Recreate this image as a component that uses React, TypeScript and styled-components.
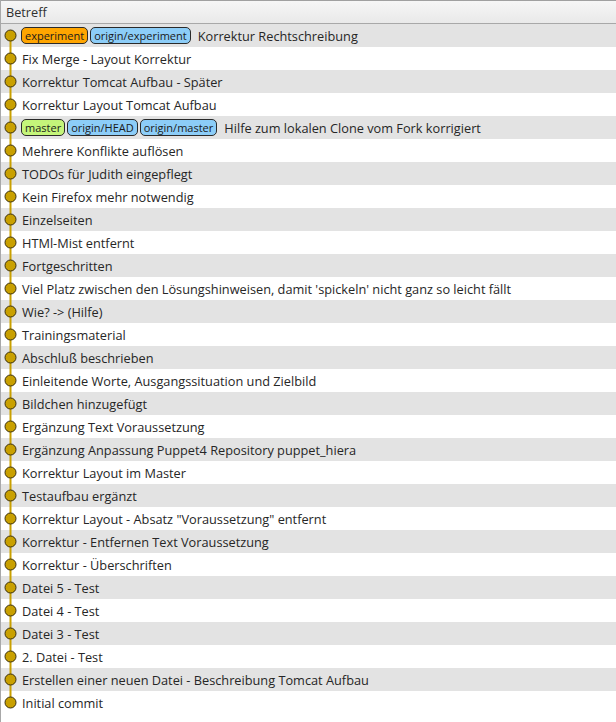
import React from "react";
import styled, { createGlobalStyle } from "styled-components";

const Global = createGlobalStyle`
  html, body { margin: 0; padding: 0; background: #ffffff; }
  body { font-family: "Open Sans", "Noto Sans", sans-serif; }
`;

type Ref = { name: string; kind: "local" | "remote" | "head" };
type Commit = { msg: string; refs?: Ref[] };

const commits: Commit[] = [
  { msg: "Korrektur Rechtschreibung", refs: [{ name: "experiment", kind: "head" }, { name: "origin/experiment", kind: "remote" }] },
  { msg: "Fix Merge - Layout Korrektur" },
  { msg: "Korrektur Tomcat Aufbau - Später" },
  { msg: "Korrektur Layout Tomcat Aufbau" },
  { msg: "Hilfe zum lokalen Clone vom Fork korrigiert", refs: [{ name: "master", kind: "local" }, { name: "origin/HEAD", kind: "remote" }, { name: "origin/master", kind: "remote" }] },
  { msg: "Mehrere Konflikte auflösen" },
  { msg: "TODOs für Judith eingepflegt" },
  { msg: "Kein Firefox mehr notwendig" },
  { msg: "Einzelseiten" },
  { msg: "HTMl-Mist entfernt" },
  { msg: "Fortgeschritten" },
  { msg: "Viel Platz zwischen den Lösungshinweisen, damit 'spickeln' nicht ganz so leicht fällt" },
  { msg: "Wie? -> (Hilfe)" },
  { msg: "Trainingsmaterial" },
  { msg: "Abschluß beschrieben" },
  { msg: "Einleitende Worte, Ausgangssituation und Zielbild" },
  { msg: "Bildchen hinzugefügt" },
  { msg: "Ergänzung Text Voraussetzung" },
  { msg: "Ergänzung Anpassung Puppet4 Repository puppet_hiera" },
  { msg: "Korrektur Layout im Master" },
  { msg: "Testaufbau ergänzt" },
  { msg: "Korrektur Layout - Absatz \"Voraussetzung\" entfernt" },
  { msg: "Korrektur - Entfernen Text Voraussetzung" },
  { msg: "Korrektur - Überschriften" },
  { msg: "Datei 5 - Test" },
  { msg: "Datei 4 - Test" },
  { msg: "Datei 3 - Test" },
  { msg: "2. Datei - Test" },
  { msg: "Erstellen einer neuen Datei - Beschreibung Tomcat Aufbau" },
  { msg: "Initial commit" },
];

const Frame = styled.div`
  width: 616px;
  height: 722px;
  box-sizing: border-box;
  border-left: 1px solid #a8a8a8;
  overflow: hidden;
  display: flex;
  flex-direction: column;
`;

const Header = styled.div`
  height: 22px;
  box-sizing: content-box;
  border-top: 1px solid #a0a0a0;
  border-bottom: 1px solid #a8a8a8;
  background: linear-gradient(#f6f6f6, #e9e9e9);
  display: flex;
  align-items: center;
  padding-left: 5px;
  font-size: 12.7px;
  color: #303030;
`;

const List = styled.div`
  display: flex;
  flex-direction: column;
`;

const Row = styled.div<{ $alt: boolean }>`
  height: 23px;
  display: flex;
  align-items: center;
  background: ${(p) => (p.$alt ? "#e3e3e3" : "#ffffff")};
  font-size: 12.75px;
  color: #262626;
  white-space: nowrap;
`;

const Graph = styled.svg`
  flex: 0 0 auto;
  width: 20px;
  height: 23px;
  display: block;
`;

const Content = styled.div`
  display: flex;
  align-items: center;
  gap: 2px;
`;

const badgeColors: Record<Ref["kind"], string> = {
  head: "#ffa500",
  remote: "#8ccdf8",
  local: "#c4f57a",
};

const Badge = styled.span<{ $kind: Ref["kind"] }>`
  display: inline-flex;
  align-items: center;
  height: 15px;
  padding: 0 3px;
  border: 1px solid #2a2a2a;
  border-radius: 5px;
  background: ${(p) => badgeColors[p.$kind]};
  font-size: 11px;
  color: #1a1a1a;
`;

const Message = styled.span`
  margin-left: 5px;
`;

const MessagePlain = styled.span`
  margin-left: 1px;
`;

function GraphCell({ first, last }: { first: boolean; last: boolean }) {
  return (
    <Graph viewBox="0 0 20 23">
      {!first && <line x1="9.5" y1="0" x2="9.5" y2="11.5" stroke="#c9a000" strokeWidth="2" />}
      {!last && <line x1="9.5" y1="11.5" x2="9.5" y2="23" stroke="#c9a000" strokeWidth="2" />}
      <circle cx="9.5" cy="11.5" r="5.5" fill="#c9a000" stroke="#3a3010" strokeWidth="1" />
    </Graph>
  );
}

export default function App() {
  return (
    <>
      <Global />
      <Frame>
        <Header>Betreff</Header>
        <List>
          {commits.map((c, i) => (
            <Row key={i} $alt={i % 2 === 0}>
              <GraphCell first={i === 0} last={i === commits.length - 1} />
              <Content>
                {c.refs?.map((r) => (
                  <Badge key={r.name} $kind={r.kind}>{r.name}</Badge>
                ))}
                {c.refs ? <Message>{c.msg}</Message> : <MessagePlain>{c.msg}</MessagePlain>}
              </Content>
            </Row>
          ))}
        </List>
      </Frame>
    </>
  );
}
